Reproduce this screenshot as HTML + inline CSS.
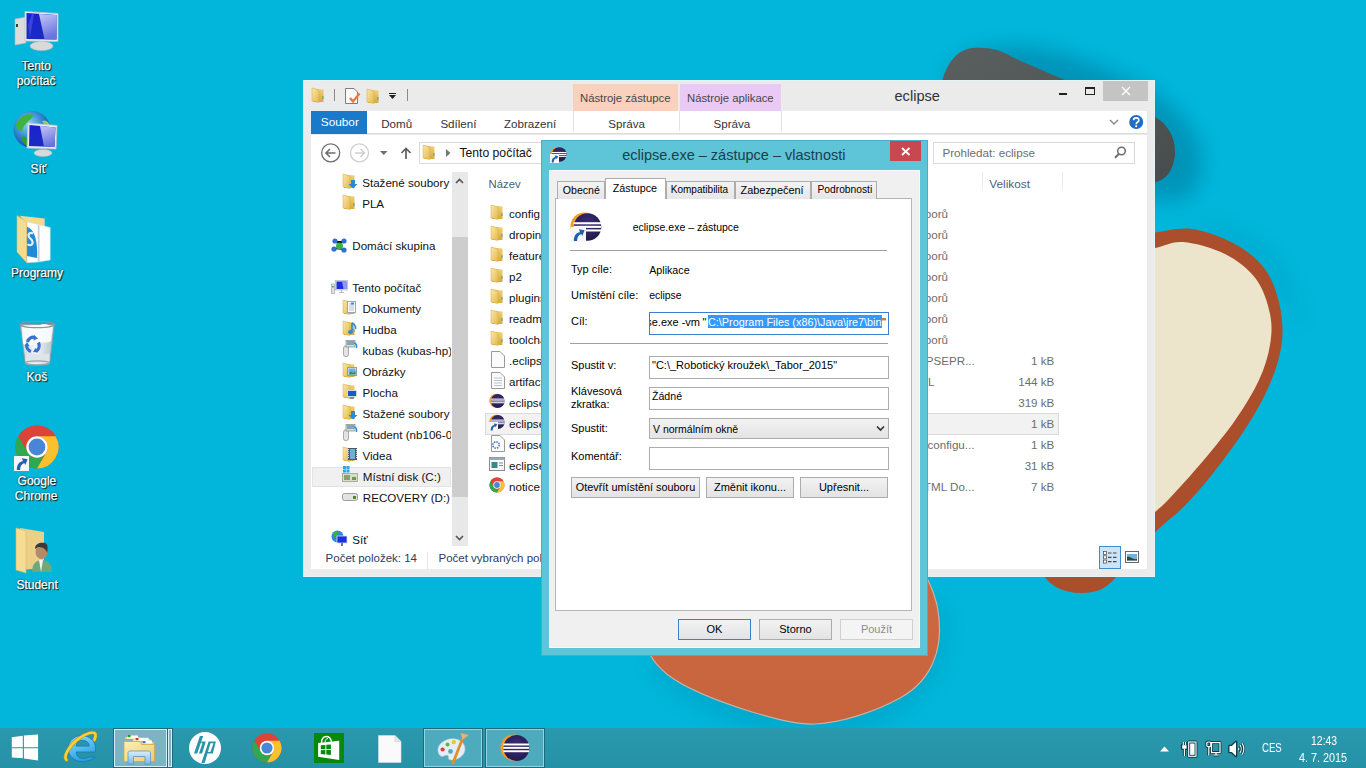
<!DOCTYPE html>
<html><head><meta charset="utf-8">
<style>
*{margin:0;padding:0;box-sizing:border-box}
html,body{width:1366px;height:768px;overflow:hidden}
body{background:#01b6da;font-family:"Liberation Sans",sans-serif;position:relative;font-size:12px;color:#000}
.a{position:absolute}
.t{position:absolute;white-space:nowrap;line-height:1}
.dl{color:#fff;-webkit-text-stroke:0.25px #fff;text-shadow:1px 1px 1px rgba(0,0,0,.95),0 0 2px rgba(0,0,0,.7)}
svg{position:absolute;overflow:visible}
</style></head><body>
<svg width="0" height="0" style="left:0;top:0"><defs>
<linearGradient id="gFold" x1="0" y1="0" x2="1" y2="1"><stop offset="0" stop-color="#fbe9a6"/><stop offset="1" stop-color="#e2b94f"/></linearGradient>
<linearGradient id="gFoldB" x1="0" y1="0" x2="0" y2="1"><stop offset="0" stop-color="#f1d27a"/><stop offset="1" stop-color="#d9aa3c"/></linearGradient>
<symbol id="fold16" viewBox="0 0 16 16">
  <path d="M3 1.5 L13.5 2.5 L13.5 15 L3 15 Z" fill="url(#gFoldB)"/>
  <path d="M2 1 L9 3 L9 15.5 L2 14 Z" fill="url(#gFold)" stroke="#d4a93f" stroke-width="0.5"/>
  <rect x="12.3" y="9" width="1.2" height="3" fill="#5aa58a"/>
</symbol>
<radialGradient id="gEcl" cx="0.5" cy="0.4" r="0.6"><stop offset="0" stop-color="#3c2f7a"/><stop offset="1" stop-color="#231a4c"/></radialGradient>
<symbol id="ecl" viewBox="0 0 32 32">
  <circle cx="14.5" cy="15.5" r="14" fill="#f39a2a"/>
  <circle cx="17.5" cy="16" r="13.8" fill="url(#gEcl)"/>
  <rect x="3.5" y="11.2" width="27.5" height="2.1" fill="#fff"/>
  <rect x="3.5" y="14.8" width="27.5" height="2.1" fill="#fff"/>
  <rect x="3.5" y="18.4" width="27.5" height="2.1" fill="#fff"/>
</symbol>
<symbol id="scut" viewBox="0 0 16 16">
  <rect x="0" y="0" width="16" height="16" fill="#f4f6f8"/>
  <path d="M3 15 C3 9 5.5 6 9.5 5.5 L8.5 2.5 L14.5 3.5 L12 9.5 L11 7.5 C8 8.5 6.5 11 6.5 15 Z" fill="#1f5fb0"/>
</symbol>
</defs></svg>
<svg width="1366" height="768" style="left:0;top:0">
<defs>
 <filter id="blur8" x="-50%" y="-50%" width="200%" height="200%"><feGaussianBlur stdDeviation="10"/></filter>
 <linearGradient id="gDark" x1="0" y1="0" x2="1" y2="1"><stop offset="0" stop-color="#59605f"/><stop offset="1" stop-color="#474d4c"/></linearGradient>
 <linearGradient id="gOr" x1="0" y1="0" x2="0" y2="1"><stop offset="0" stop-color="#cb6942"/><stop offset="1" stop-color="#c8643d"/></linearGradient>
</defs>
<path d="M950 70 C990 30 1060 45 1140 85 C1200 115 1220 170 1185 200 L940 200 Z" fill="#006a90" opacity="0.45" filter="url(#blur8)"/>
<path d="M1200 225 C1260 225 1300 280 1300 330 C1290 300 1250 240 1200 235 Z" fill="#006f96" opacity="0.18" filter="url(#blur8)"/>
<path d="M700 600 L940 600 C960 660 920 730 820 735 C740 735 680 700 650 670 Z" fill="#0089aa" opacity="0.3" filter="url(#blur8)"/>
<path d="M942 82 C947 62 958 49 973 48 C990 47 1000 50 1012 57 C1040 70 1100 95 1155 117 C1168 124 1176 138 1175 155 C1173 172 1165 182 1150 183 L940 183 Z" fill="url(#gDark)"/>
<path d="M1140.0 234.0 C1142.5 233.8 1146.4 233.3 1155.0 232.5 C1163.6 231.7 1178.7 227.2 1191.7 229.0 C1204.7 230.8 1221.2 236.8 1233.0 243.0 C1244.8 249.2 1255.2 257.3 1262.5 266.0 C1269.8 274.7 1273.7 284.7 1277.0 295.0 C1280.3 305.3 1282.2 317.6 1282.5 328.0 C1282.8 338.4 1281.6 347.0 1279.0 357.5 C1276.4 368.0 1272.2 379.2 1266.7 391.0 C1261.2 402.8 1254.8 414.2 1245.8 428.0 C1236.8 441.8 1223.0 460.8 1212.5 474.0 C1202.0 487.2 1192.6 497.8 1183.0 507.5 C1173.4 517.2 1166.2 520.9 1155.0 532.5 C1143.8 544.1 1122.5 569.6 1116.0 577.0 C1105 590 1095 593 1082 593 C1062 593 1048 585 1042 572 L1040 300 Z" fill="#ab4e2c"/>
<path d="M1140.0 249.0 C1142.5 248.8 1147.8 249.2 1155.0 248.0 C1162.2 246.8 1171.3 241.0 1183.0 242.0 C1194.7 243.0 1212.8 247.8 1225.0 254.0 C1237.2 260.2 1248.5 269.0 1256.0 279.0 C1263.5 289.0 1267.7 303.0 1270.0 314.0 C1272.3 325.0 1271.8 334.0 1270.0 345.0 C1268.2 356.0 1264.7 367.7 1259.0 380.0 C1253.3 392.3 1245.3 405.5 1236.0 419.0 C1226.7 432.5 1214.2 447.7 1203.0 461.0 C1191.8 474.3 1177.0 490.5 1169.0 499.0 C1161.0 507.5 1159.0 508.2 1155.0 512.0 C1151.0 515.8 1146.7 520.3 1145.0 522.0 Z" fill="#ede4cc"/>
<path d="M651 656 C655 664 662 670 668 675 C685 688 720 702 752 712 C780 720 800 725 815 724 C840 723 875 712 900 698 C918 688 928 676 934 660 C940 645 941 625 937 605 C934 592 930 584 928 580 L650 580 Z" fill="url(#gOr)" stroke="#e8c8b0" stroke-width="1.2" stroke-opacity="0.7"/>
</svg>
<svg width="60" height="60" style="left:8px;top:5px" viewBox="0 0 60 60">
 <defs><linearGradient id="gScr" x1="0" y1="0" x2="0" y2="1"><stop offset="0" stop-color="#1a22d0"/><stop offset="1" stop-color="#1a2cc0"/></linearGradient><linearGradient id="gScrL" x1="0" y1="0" x2="0.3" y2="1"><stop offset="0" stop-color="#c4c8f6"/><stop offset="1" stop-color="#6a74e0"/></linearGradient></defs>
 <path d="M7 14 L18 12 L18 38 L7 40 Z" fill="#dcdcdc" stroke="#b5b5b5" stroke-width="0.6"/>
 <rect x="8" y="19" width="2" height="3" fill="#2a4a2a"/>
 <path d="M17 6.5 L50 8.5 L50 36.5 L17 36 Z" fill="#e9ebee" stroke="#c0c4c8" stroke-width="0.8"/>
 <path d="M18.5 8 L48.5 10 L48.5 34.5 L18.5 34 Z" fill="url(#gScr)"/><path d="M31 8.9 L48.5 10 L48.5 34.5 L36.5 34.3 Z" fill="url(#gScrL)"/><path d="M20 20 L24 9 L26 9 L22 33 Z" fill="#5a64e0" opacity="0.5"/>
 <rect x="31" y="36" width="6" height="3" fill="#d0d0d0"/>
 <ellipse cx="33.5" cy="41" rx="11.5" ry="4.5" fill="#dadada" stroke="#bdbdbd" stroke-width="0.6"/>
</svg>
<svg width="60" height="55" style="left:8px;top:105px" viewBox="0 0 60 55">
 <defs><radialGradient id="gGlobe" cx="0.4" cy="0.35" r="0.7"><stop offset="0" stop-color="#8ad8f0"/><stop offset="0.6" stop-color="#2a7fd0"/><stop offset="1" stop-color="#1a3f98"/></radialGradient></defs>
 <circle cx="24" cy="24.5" r="18.5" fill="url(#gGlobe)"/>
 <path d="M8 20 C12 10 20 8 26 10 C22 16 16 18 14 26 C11 26 9 24 8 20 Z" fill="#3fb43a"/>
 <path d="M13 32 C18 30 22 34 21 42 C17 40 14 37 13 32 Z" fill="#2f9e2a"/>
 <path d="M34 16 C38 14 42 18 42 22 C39 22 36 20 34 16 Z" fill="#8fcf5a"/>
 <path d="M20 18 L49 20.5 L48 44 L19 43 Z" fill="#e9ebee" stroke="#c0c4c8" stroke-width="0.8"/>
 <path d="M21.5 20 L47.5 22.5 L46.5 42 L21 41 Z" fill="url(#gScr)"/><path d="M32 21 L47.5 22.5 L46.5 42 L36 41.5 Z" fill="url(#gScrL)"/>
 <ellipse cx="35" cy="48" rx="9" ry="3.5" fill="#dadada" stroke="#bdbdbd" stroke-width="0.6"/>
</svg>
<svg width="60" height="60" style="left:8px;top:208px" viewBox="0 0 60 60">
 <path d="M11.7 7.8 L36.7 10.5 L36.7 20 L18.75 16 Z" fill="#f2d98e"/>
 <path d="M18.75 14 L30 16.5 L30 54 L18.75 54.7 Z" fill="#ffffff" stroke="#d8e2e8" stroke-width="0.5"/>
 <path d="M30 16.5 L42.2 19.5 L42.2 52 L30 54 Z" fill="#fdfdfd" stroke="#d8e2e8" stroke-width="0.5"/>
 <path d="M30 17 L31.5 17.5 L31.5 53.5 L30 54 Z" fill="#c8d0d6"/>
 <path d="M18.75 18.5 C26 21 30 32 29 50 L18.75 48 Z" fill="#1f8ad8"/>
 <path d="M25 25.5 C22 24 19.5 26 21 29 C22.5 31.5 25.5 32 24.5 35.5 C23.5 38 20.5 37.5 19.5 36" stroke="#e4eef4" stroke-width="2.2" fill="none"/>
 <path d="M9 7.4 L18.75 14 L18.75 54.7 L9 44 Z" fill="#f5dc8f" stroke="#dcb860" stroke-width="0.6"/>
</svg>
<svg width="60" height="55" style="left:8px;top:315px" viewBox="0 0 60 55">
 <defs><linearGradient id="gBin" x1="0" y1="0" x2="1" y2="0"><stop offset="0" stop-color="#c3d3dc"/><stop offset="0.45" stop-color="#f4f8fa"/><stop offset="1" stop-color="#aebfc8"/></linearGradient></defs>
 <path d="M12.2 9.5 L46.2 9.5 L41.8 47.5 C41.5 50.5 17.5 50.5 17.2 47.5 Z" fill="url(#gBin)" stroke="#8d9ba3" stroke-width="0.8"/>
 <path d="M14 12 C20 8 26 14 32 10 C38 7 42 12 45 11 L43 26 C38 30 30 24 24 30 C20 33 16 30 15 28 Z" fill="#fbfdfe" opacity="0.9"/>
 <path d="M18 40 C24 36 34 42 41 38 L41.5 46 C35 49 22 49 17.6 46 Z" fill="#dfe6ea"/>
 <ellipse cx="29.2" cy="9.5" rx="17" ry="3.2" fill="none" stroke="#8a969c" stroke-width="1.2"/>
 <ellipse cx="29.5" cy="48" rx="12.2" ry="2.2" fill="none" stroke="#9aa4a9" stroke-width="1.2"/>
 <path d="M19.5 27 C20.5 23 24 21.5 27 22.5" stroke="#3a6fd0" stroke-width="3.2" fill="none"/><path d="M26 20 L30 23.5 L25.5 25.5 Z" fill="#3a6fd0"/>
 <path d="M30.5 27.5 C32 31 31 34.5 28 36" stroke="#3a6fd0" stroke-width="3.2" fill="none"/><path d="M30 37.5 L25 37 L27.5 33 Z" fill="#3a6fd0"/>
 <path d="M23 36.5 C20 35.5 18.3 32.5 18.8 29.5" stroke="#3a6fd0" stroke-width="3.2" fill="none"/><path d="M16.5 31 L19 27 L21.5 31 Z" fill="#3a6fd0"/>
</svg>
<svg width="60" height="55" style="left:8px;top:420px" viewBox="0 0 60 55"><circle cx="29" cy="27" r="21.5" fill="#db4437"/><path d="M47.62 16.25 A21.5 21.5 0 0 0 10.38 16.25 L19.69 32.38 A10.75 10.75 0 0 1 29.00 16.25 Z" fill="#db4437"/><path d="M10.38 16.25 A21.5 21.5 0 0 0 29.00 48.50 L38.31 32.38 A10.75 10.75 0 0 1 19.69 32.38 Z" fill="#2fa84f"/><path d="M29.00 48.50 A21.5 21.5 0 0 0 47.62 16.25 L29.00 16.25 A10.75 10.75 0 0 1 38.31 32.38 Z" fill="#fbc02d"/><circle cx="29" cy="27" r="10.75" fill="#fff"/><circle cx="29" cy="27" r="8.4" fill="#4a86d8"/></svg>
<svg width="15" height="15" style="left:14px;top:456px" viewBox="0 0 16 16"><use href="#scut"/></svg>
<svg width="60" height="60" style="left:8px;top:520px" viewBox="0 0 60 60">
 <path d="M12 8 L36 12 L36 48 L12 50 Z" fill="#ecd08a"/>
 <path d="M8 8 L18 11 L18 53 L8 50 Z" fill="#f6dd95" stroke="#dcbb60" stroke-width="0.6"/>
 <path d="M24 52 C24 44 28 40 34 40 C40 40 44 44 44 52 Z" fill="#6fa87a"/>
 <path d="M31 40 L33 52 L35 40 Z" fill="#f4f4f4"/>
 <ellipse cx="33.5" cy="32" rx="6" ry="7" fill="#b38a6a"/>
 <path d="M27 29 C27 23 33 22 37 23 C40 24 40 28 39 33 C38 29 35 27 30 27 Z" fill="#3a3a3a"/>
</svg>
<div class="t dl" style="left:21.5px;top:59.74px;font-size:12px;color:#fff;">Tento</div>
<div class="t dl" style="left:16.8px;top:74.74px;font-size:12px;color:#fff;">počítač</div>
<div class="t dl" style="left:30.5px;top:162.54px;font-size:12px;color:#fff;">Síť</div>
<div class="t dl" style="left:11.0px;top:266.74px;font-size:12px;color:#fff;">Programy</div>
<div class="t dl" style="left:26.6px;top:370.74px;font-size:12px;color:#fff;">Koš</div>
<div class="t dl" style="left:17.6px;top:475.44px;font-size:12px;color:#fff;">Google</div>
<div class="t dl" style="left:14.8px;top:489.74px;font-size:12px;color:#fff;">Chrome</div>
<div class="t dl" style="left:16.4px;top:578.54px;font-size:12px;color:#fff;">Student</div>
<div class="a" style="left:303px;top:80px;width:852px;height:497px;background:#ebebeb;border:1px solid #e2f4f8"></div>
<div class="a" style="left:573px;top:84px;width:105px;height:27px;background:#fad1bd"></div>
<div class="a" style="left:680px;top:84px;width:101px;height:27px;background:#eac9f5"></div>
<div class="t " style="left:580.0px;top:93.13px;font-size:11.3px;color:#474747;">Nástroje zástupce</div>
<div class="t " style="left:687.0px;top:93.13px;font-size:11.3px;color:#474747;">Nástroje aplikace</div>
<div class="t " style="left:894.5px;top:88.54px;font-size:14.6px;color:#333;">eclipse</div>
<div class="a" style="left:1059px;top:93px;width:8px;height:2px;background:#222"></div>
<div class="a" style="left:1085px;top:87px;width:10px;height:8px;border:1px solid #222;border-top-width:2px"></div>
<div class="a" style="left:1103px;top:81px;width:45px;height:20px;background:#c4c4c4"></div>
<svg width="10" height="10" style="left:1121px;top:86px"><path d="M1 1 L9 9 M9 1 L1 9" stroke="#fff" stroke-width="1.3"/></svg>
<svg width="16" height="16" style="left:310px;top:87px"><use href="#fold16"/></svg>
<div class="a" style="left:334px;top:89px;width:1px;height:12px;background:#8a8a8a"></div>
<svg width="18" height="17" style="left:344px;top:88px">
<path d="M1.5 0.5 L10 0.5 L13.5 4 L13.5 15.5 L1.5 15.5 Z" fill="#fafafa" stroke="#7d7d7d"/>
<path d="M6 10 L9 13.5 L15.5 5.5" stroke="#ea7a3c" stroke-width="2.4" fill="none"/></svg>
<svg width="16" height="16" style="left:365px;top:88px"><use href="#fold16"/></svg>
<div class="a" style="left:389px;top:93px;width:7px;height:1px;background:#222"></div>
<svg width="8" height="5" style="left:389px;top:95px"><path d="M0 0 L7 0 L3.5 4 Z" fill="#222"/></svg>
<div class="a" style="left:407px;top:89px;width:1px;height:12px;background:#8a8a8a"></div>
<div class="a" style="left:311px;top:111px;width:836px;height:23px;background:#fff;border-bottom:1px solid #dadbdc"></div>
<div class="a" style="left:311px;top:111px;width:56px;height:23px;background:#1979ca"></div>
<div class="t " style="left:320.8px;top:117.31px;font-size:11.8px;color:#fff;">Soubor</div>
<div class="t " style="left:381.2px;top:117.98px;font-size:11.6px;color:#333;">Domů</div>
<div class="t " style="left:440.4px;top:117.98px;font-size:11.6px;color:#333;">Sdílení</div>
<div class="t " style="left:504.0px;top:117.98px;font-size:11.6px;color:#333;">Zobrazení</div>
<div class="a" style="left:573px;top:111px;width:1px;height:20px;background:#e3e3e3"></div>
<div class="a" style="left:679px;top:111px;width:1px;height:20px;background:#e3e3e3"></div>
<div class="a" style="left:781px;top:111px;width:1px;height:20px;background:#e3e3e3"></div>
<div class="t " style="left:608.3px;top:117.98px;font-size:11.6px;color:#333;">Správa</div>
<div class="t " style="left:713.5px;top:117.98px;font-size:11.6px;color:#333;">Správa</div>
<svg width="10" height="7" style="left:1109px;top:119px"><path d="M1 1 L5 5 L9 1" stroke="#8c8c8c" stroke-width="1.5" fill="none"/></svg>
<svg width="15" height="15" style="left:1129px;top:115px"><circle cx="7.2" cy="7" r="7" fill="#1e6ec5"/>
<path d="M4.6 5.2 C4.6 2.2 9.8 2.2 9.8 5.2 C9.8 7.2 7.2 7.2 7.2 9.2" stroke="#fff" stroke-width="1.7" fill="none"/><rect x="6.3" y="10.3" width="1.8" height="1.8" fill="#fff"/></svg>
<div class="a" style="left:311px;top:135px;width:836px;height:434px;background:#fff"></div>
<svg width="20" height="20" style="left:321px;top:143px"><circle cx="9.7" cy="9.9" r="9" fill="none" stroke="#6e6e6e" stroke-width="1.3"/>
<path d="M5 10 L14.5 10 M9 6 L5 10 L9 14" stroke="#6e6e6e" stroke-width="1.6" fill="none"/></svg>
<svg width="20" height="20" style="left:350px;top:143px"><circle cx="9.5" cy="9.9" r="9" fill="none" stroke="#cfcfcf" stroke-width="1.3"/>
<path d="M5 10 L14.5 10 M10.5 6 L14.5 10 L10.5 14" stroke="#cfcfcf" stroke-width="1.6" fill="none"/></svg>
<svg width="8" height="5" style="left:380px;top:151px"><path d="M0 0 L7.5 0 L3.75 4 Z" fill="#6e6e6e"/></svg>
<svg width="12" height="13" style="left:400px;top:147px"><path d="M6 12 L6 1.5 M1.5 6 L6 1.5 L10.5 6" stroke="#5e5e5e" stroke-width="1.7" fill="none"/></svg>
<div class="a" style="left:419px;top:142px;width:200px;height:22px;background:#fff;border:1px solid #d9d9d9"></div>
<svg width="16" height="16" style="left:421px;top:144px"><use href="#fold16"/></svg>
<svg width="5" height="8" style="left:446px;top:149px"><path d="M0 0 L4.5 4 L0 8 Z" fill="#777"/></svg>
<div class="t " style="left:459.4px;top:146.97px;font-size:12.2px;color:#111;">Tento počítač</div>
<div class="a" style="left:933px;top:142px;width:202px;height:22px;background:#fff;border:1px solid #d9d9d9"></div>
<div class="t " style="left:942.4px;top:147.44px;font-size:11.65px;color:#6d6d6d;">Prohledat: eclipse</div>
<svg width="13" height="13" style="left:1114px;top:146px"><circle cx="7.5" cy="5" r="3.8" fill="none" stroke="#6d6d6d" stroke-width="1.5"/><path d="M5 7.7 L1 11.7" stroke="#6d6d6d" stroke-width="2"/></svg>
<div class="a" style="left:452px;top:172px;width:16px;height:374px;background:#e8e8e8"></div>
<div class="a" style="left:452px;top:237px;width:16px;height:260px;background:#cdcdcd"></div>
<svg width="10" height="6" style="left:455px;top:178px"><path d="M1 5 L4.5 1.5 L8 5" stroke="#555" stroke-width="1.6" fill="none"/></svg>
<svg width="10" height="6" style="left:455px;top:535px"><path d="M1 1 L4.5 4.5 L8 1" stroke="#555" stroke-width="1.6" fill="none"/></svg>
<div class="a" style="left:312px;top:467px;width:139px;height:20px;background:#f0f0f0;border:1px solid #e3e3e3"></div>
<div class="a" style="left:311px;top:170px;width:140px;height:380px;overflow:hidden">
<div class="t " style="left:51.2px;top:7.18px;font-size:11.6px;color:#111;">Stažené soubory</div>
<svg width="16" height="16" style="left:30px;top:3px"><use href="#fold16"/></svg>
<svg width="10" height="9" style="left:37px;top:10px"><path d="M3 0 L7 0 L7 4 L9.5 4 L5 8.5 L0.5 4 L3 4 Z" fill="#2a8ad8"/></svg>
<div class="t " style="left:51.2px;top:28.18px;font-size:11.6px;color:#111;">PLA</div>
<svg width="16" height="16" style="left:30px;top:24px"><use href="#fold16"/></svg>
<div class="t " style="left:41.3px;top:70.18px;font-size:11.6px;color:#111;">Domácí skupina</div>
<svg width="17" height="17" style="left:20px;top:67px"><path d="M4 4 L8.5 9 L13 4 M3 12 L8.5 9 L13 13" stroke="#7ab" stroke-width="1"/><circle cx="8.5" cy="9" r="3.5" fill="#3cb043"/><circle cx="4" cy="4" r="2.6" fill="#2f6fcf"/><circle cx="13" cy="4" r="2.6" fill="#2f6fcf"/><circle cx="3" cy="12" r="2.6" fill="#2f6fcf"/><circle cx="13" cy="13" r="2.6" fill="#2f6fcf"/></svg>
<div class="t " style="left:41.3px;top:112.18px;font-size:11.6px;color:#111;">Tento počítač</div>
<svg width="17" height="15" style="left:20px;top:110px"><rect x="0.5" y="4" width="3" height="9.5" fill="#e0e0e0" stroke="#999" stroke-width="0.6"/><rect x="1.2" y="6" width="1.5" height="1.5" fill="#3a3"/><rect x="4.5" y="0.5" width="12" height="9.5" fill="#e8eaec" stroke="#aab" stroke-width="0.6"/><rect x="5.5" y="1.5" width="10" height="7.5" fill="#1a2ee0"/><path d="M11 1.5 L15.5 1.5 L15.5 9 L12.5 9 Z" fill="#8f98ee"/><path d="M8 12.5 H13 M10.5 10 V12.5" stroke="#bbb" stroke-width="1.2"/></svg>
<div class="t " style="left:51.5px;top:133.18px;font-size:11.6px;color:#111;">Dokumenty</div>
<svg width="16" height="16" style="left:30px;top:129px"><use href="#fold16"/></svg>
<svg width="9" height="12" style="left:36px;top:131px"><rect x="0.5" y="0.5" width="8" height="11" fill="#fff" stroke="#9aa"/><path d="M2 3 H7 M2 5 H7 M2 7 H7 M2 9 H7" stroke="#9ab" stroke-width="0.8"/><rect x="4" y="1.5" width="3" height="2" fill="#3a8ad0"/></svg>
<div class="t " style="left:51.5px;top:154.18px;font-size:11.6px;color:#111;">Hudba</div>
<svg width="16" height="16" style="left:30px;top:150px"><use href="#fold16"/></svg>
<svg width="9" height="13" style="left:37px;top:152px"><path d="M4 1 L4 9 M4 1 C6 2 8 4 7.5 7" stroke="#2a8ad8" stroke-width="1.6" fill="none"/><ellipse cx="2.5" cy="10" rx="2.5" ry="2" fill="#2a8ad8"/></svg>
<div class="t " style="left:51.5px;top:175.18px;font-size:11.6px;color:#111;">kubas (kubas-hp)</div>
<svg width="17" height="17" style="left:31px;top:170px"><rect x="1.5" y="6" width="5" height="10.5" rx="2" fill="#e4e4e4" stroke="#8a8a8a" stroke-width="0.7"/><rect x="4" y="0.5" width="9" height="6.5" fill="#cfe0d8" stroke="#777" stroke-width="0.6"/><path d="M5 2 H12 M5 4 H12" stroke="#3a6a9a" stroke-width="1"/><path d="M12 3 C14 3 15 5 14.5 8" stroke="#2a8ad8" stroke-width="1.4" fill="none"/></svg>
<div class="t " style="left:51.5px;top:196.18px;font-size:11.6px;color:#111;">Obrázky</div>
<svg width="16" height="16" style="left:30px;top:192px"><use href="#fold16"/></svg>
<svg width="10" height="9" style="left:36px;top:197px"><rect x="0.5" y="0.5" width="9" height="8" fill="#eef" stroke="#99a"/><rect x="1.5" y="1.5" width="7" height="6" fill="#6ab0d8"/><path d="M1.5 7.5 L4 4.5 L6 6 L8.5 4 L8.5 7.5 Z" fill="#3a8a5a"/></svg>
<div class="t " style="left:51.5px;top:217.18px;font-size:11.6px;color:#111;">Plocha</div>
<svg width="16" height="16" style="left:30px;top:213px"><use href="#fold16"/></svg>
<svg width="10" height="9" style="left:36px;top:220px"><rect x="0.5" y="0.5" width="9" height="6" fill="#1a5ac8" stroke="#cdd"/><rect x="3" y="7" width="4" height="2" fill="#889"/></svg>
<div class="t " style="left:51.5px;top:238.18px;font-size:11.6px;color:#111;">Stažené soubory</div>
<svg width="16" height="16" style="left:30px;top:234px"><use href="#fold16"/></svg>
<svg width="10" height="9" style="left:37px;top:241px"><path d="M3 0 L7 0 L7 4 L9.5 4 L5 8.5 L0.5 4 L3 4 Z" fill="#2a8ad8"/></svg>
<div class="t " style="left:51.5px;top:259.18px;font-size:11.6px;color:#111;">Student (nb106-0</div>
<svg width="17" height="17" style="left:31px;top:254px"><rect x="1.5" y="6" width="5" height="10.5" rx="2" fill="#e4e4e4" stroke="#8a8a8a" stroke-width="0.7"/><rect x="4" y="0.5" width="9" height="6.5" fill="#cfe0d8" stroke="#777" stroke-width="0.6"/><path d="M5 2 H12 M5 4 H12" stroke="#3a6a9a" stroke-width="1"/><path d="M12 3 C14 3 15 5 14.5 8" stroke="#2a8ad8" stroke-width="1.4" fill="none"/></svg>
<div class="t " style="left:51.5px;top:280.18px;font-size:11.6px;color:#111;">Videa</div>
<svg width="16" height="16" style="left:30px;top:276px"><use href="#fold16"/></svg>
<svg width="9" height="12" style="left:37px;top:278px"><rect x="0" y="0" width="9" height="12" fill="#556"/><rect x="2" y="1" width="5" height="10" fill="#6ab0d8"/><path d="M0.5 1 V11 M8.5 1 V11" stroke="#fff" stroke-width="0.8" stroke-dasharray="1 1"/></svg>
<div class="t " style="left:51.8px;top:301.18px;font-size:11.6px;color:#111;">Místní disk (C:)</div>
<svg width="16" height="16" style="left:31px;top:296px"><rect x="1" y="0" width="3" height="3" fill="#29a8e8"/><rect x="4.5" y="0" width="3" height="3" fill="#29a8e8"/><rect x="1" y="3.5" width="3" height="3" fill="#29a8e8"/><rect x="4.5" y="3.5" width="3" height="3" fill="#29a8e8"/><rect x="0.5" y="7.5" width="15" height="8" fill="#d8dccf" stroke="#8c9a7e" stroke-width="0.7"/><rect x="2" y="9" width="6" height="5" fill="#8aa070"/><rect x="10" y="11" width="4" height="3" fill="#6a9a4a"/></svg>
<div class="t " style="left:51.8px;top:322.18px;font-size:11.6px;color:#111;">RECOVERY (D:)</div>
<svg width="16" height="10" style="left:31px;top:322px"><rect x="0.5" y="1.5" width="15" height="7" rx="2" fill="#e2e2e2" stroke="#8a8a8a" stroke-width="0.8"/><rect x="11" y="4" width="3" height="3" fill="#4a8a2a"/></svg>
<div class="t " style="left:41.3px;top:363.68px;font-size:11.6px;color:#111;">Síť</div>
<svg width="17" height="17" style="left:20px;top:359.5px"><circle cx="6.5" cy="6.5" r="6" fill="#2a8ad8"/><path d="M2 4 C4 1 7 1 8 3 C6 5 4 6 3 8 Z" fill="#3cb043"/><rect x="6" y="6" width="10" height="7" fill="#1a2ee0" stroke="#ddd" stroke-width="0.8"/><rect x="10" y="13" width="2" height="3" fill="#777"/></svg>
</div>
<div class="t " style="left:488.6px;top:179.23px;font-size:11.3px;color:#4c607a;">Název</div>
<div class="a" style="left:982px;top:172px;width:1px;height:18px;background:#e8ecf0"></div>
<div class="a" style="left:1062px;top:172px;width:1px;height:18px;background:#e8ecf0"></div>
<div class="t " style="left:989.3px;top:178.61px;font-size:11.8px;color:#4c607a;">Velikost</div>
<div class="a" style="left:485px;top:413px;width:574px;height:22px;background:#f2f2f2;border:1px solid #dadada"></div>
<div class="a" style="left:480px;top:200px;width:61px;height:300px;overflow:hidden">
<div class="t " style="left:29.0px;top:8.18px;font-size:11.6px;color:#111;">config</div>
<svg width="16" height="16" style="left:9px;top:4px"><use href="#fold16"/></svg>
<div class="t " style="left:29.0px;top:29.18px;font-size:11.6px;color:#111;">dropins</div>
<svg width="16" height="16" style="left:9px;top:25px"><use href="#fold16"/></svg>
<div class="t " style="left:29.0px;top:50.18px;font-size:11.6px;color:#111;">features</div>
<svg width="16" height="16" style="left:9px;top:46px"><use href="#fold16"/></svg>
<div class="t " style="left:29.0px;top:71.18px;font-size:11.6px;color:#111;">p2</div>
<svg width="16" height="16" style="left:9px;top:67px"><use href="#fold16"/></svg>
<div class="t " style="left:29.0px;top:92.18px;font-size:11.6px;color:#111;">plugins</div>
<svg width="16" height="16" style="left:9px;top:88px"><use href="#fold16"/></svg>
<div class="t " style="left:29.0px;top:113.18px;font-size:11.6px;color:#111;">readme</div>
<svg width="16" height="16" style="left:9px;top:109px"><use href="#fold16"/></svg>
<div class="t " style="left:29.0px;top:134.18px;font-size:11.6px;color:#111;">toolchains</div>
<svg width="16" height="16" style="left:9px;top:130px"><use href="#fold16"/></svg>
<div class="t " style="left:29.0px;top:155.18px;font-size:11.6px;color:#111;">.eclipseproduct</div>
<svg width="14" height="17" style="left:11px;top:151px"><path d="M0.5 0.5 L9 0.5 L13.5 5 L13.5 16.5 L0.5 16.5 Z" fill="#fbfbfb" stroke="#9a9a9a"/></svg>
<div class="t " style="left:29.0px;top:176.18px;font-size:11.6px;color:#111;">artifacts.xml</div>
<svg width="14" height="17" style="left:11px;top:172px"><path d="M0.5 0.5 L9 0.5 L13.5 5 L13.5 16.5 L0.5 16.5 Z" fill="#fbfbfb" stroke="#9a9a9a"/><path d="M3 6 H11 M3 8.5 H11 M3 11 H11 M3 13.5 H11" stroke="#b8c4d0"/></svg>
<div class="t " style="left:29.0px;top:197.18px;font-size:11.6px;color:#111;">eclipse.exe</div>
<svg width="16" height="16" style="left:9px;top:193px"><use href="#ecl"/></svg>
<div class="t " style="left:29.0px;top:218.18px;font-size:11.6px;color:#111;">eclipse.exe</div>
<svg width="16" height="16" style="left:9px;top:214px"><use href="#ecl"/></svg>
<svg width="9" height="9" style="left:9px;top:222px"><use href="#scut"/></svg>
<div class="t " style="left:29.0px;top:239.18px;font-size:11.6px;color:#111;">eclipse.ini</div>
<svg width="14" height="17" style="left:11px;top:235px"><path d="M0.5 0.5 L9 0.5 L13.5 5 L13.5 16.5 L0.5 16.5 Z" fill="#fbfbfb" stroke="#9a9a9a"/><circle cx="5" cy="10" r="3.2" fill="none" stroke="#4a7ac0" stroke-width="1.6" stroke-dasharray="1.5 1"/></svg>
<div class="t " style="left:29.0px;top:260.18px;font-size:11.6px;color:#111;">eclipsec.exe</div>
<svg width="17" height="14" style="left:9px;top:257px"><rect x="0.5" y="0.5" width="15" height="13" fill="#fafafa" stroke="#8a8a8a"/><rect x="0.5" y="0.5" width="15" height="2.5" fill="#9ab"/><rect x="2.5" y="5" width="6" height="6" fill="#3a8a8a"/><path d="M10 6 H14 M10 8.5 H14" stroke="#889"/></svg>
<div class="t " style="left:29.0px;top:281.18px;font-size:11.6px;color:#111;">notice.html</div>
<svg width="16" height="16" style="left:9px;top:277px"><circle cx="8" cy="8" r="7.5" fill="#db4437"/><path d="M14.50 4.25 A7.5 7.5 0 0 0 1.50 4.25 L4.75 9.88 A3.75 3.75 0 0 1 8.00 4.25 Z" fill="#db4437"/><path d="M1.50 4.25 A7.5 7.5 0 0 0 8.00 15.50 L11.25 9.88 A3.75 3.75 0 0 1 4.75 9.88 Z" fill="#2fa84f"/><path d="M8.00 15.50 A7.5 7.5 0 0 0 14.50 4.25 L8.00 4.25 A3.75 3.75 0 0 1 11.25 9.88 Z" fill="#fbc02d"/><circle cx="8" cy="8" r="3.75" fill="#fff"/><circle cx="8" cy="8" r="2.9" fill="#4a86d8"/></svg>
</div>
<div class="t" style="right:418.0px;top:208.18px;font-size:11.6px;color:#6d6d6d;text-align:right;">složka souborů</div>
<div class="t" style="right:418.0px;top:229.18px;font-size:11.6px;color:#6d6d6d;text-align:right;">složka souborů</div>
<div class="t" style="right:418.0px;top:250.18px;font-size:11.6px;color:#6d6d6d;text-align:right;">složka souborů</div>
<div class="t" style="right:418.0px;top:271.18px;font-size:11.6px;color:#6d6d6d;text-align:right;">složka souborů</div>
<div class="t" style="right:418.0px;top:292.18px;font-size:11.6px;color:#6d6d6d;text-align:right;">složka souborů</div>
<div class="t" style="right:418.0px;top:313.18px;font-size:11.6px;color:#6d6d6d;text-align:right;">složka souborů</div>
<div class="t" style="right:418.0px;top:334.18px;font-size:11.6px;color:#6d6d6d;text-align:right;">složka souborů</div>
<div class="t" style="right:391.2px;top:355.18px;font-size:11.6px;color:#6d6d6d;text-align:right;">ECLIPSEPR...</div>
<div class="t" style="right:311.7px;top:355.18px;font-size:11.6px;color:#6d6d6d;text-align:right;">1 kB</div>
<div class="t" style="right:431.5px;top:376.18px;font-size:11.6px;color:#6d6d6d;text-align:right;">Dokument XML</div>
<div class="t" style="right:311.7px;top:376.18px;font-size:11.6px;color:#6d6d6d;text-align:right;">144 kB</div>
<div class="t" style="right:311.7px;top:397.18px;font-size:11.6px;color:#6d6d6d;text-align:right;">319 kB</div>
<div class="t" style="right:311.7px;top:418.18px;font-size:11.6px;color:#6d6d6d;text-align:right;">1 kB</div>
<div class="t" style="right:391.5px;top:439.18px;font-size:11.6px;color:#6d6d6d;text-align:right;">Nastavení configu...</div>
<div class="t" style="right:311.7px;top:439.18px;font-size:11.6px;color:#6d6d6d;text-align:right;">1 kB</div>
<div class="t" style="right:311.7px;top:460.18px;font-size:11.6px;color:#6d6d6d;text-align:right;">31 kB</div>
<div class="t" style="right:391.5px;top:481.18px;font-size:11.6px;color:#6d6d6d;text-align:right;">Chrome HTML Do...</div>
<div class="t" style="right:311.7px;top:481.18px;font-size:11.6px;color:#6d6d6d;text-align:right;">7 kB</div>
<div class="t " style="left:325.6px;top:552.67px;font-size:11.5px;color:#2c3c5c;">Počet položek: 14</div>
<div class="a" style="left:427px;top:552px;width:1px;height:18px;background:#e5e5e5"></div>
<div class="t " style="left:438.5px;top:552.67px;font-size:11.5px;color:#2c3c5c;">Počet vybraných položek: 1</div>
<div class="a" style="left:1099px;top:546px;width:22px;height:23px;background:#cce4f7;border:1px solid #3d8ed0"></div>
<svg width="14" height="13" style="left:1103px;top:551px"><rect x="0.5" y="0.5" width="3" height="3" fill="#fff" stroke="#555" stroke-width="0.8"/><rect x="0.5" y="4.8" width="3" height="3" fill="#fff" stroke="#555" stroke-width="0.8"/><rect x="0.5" y="9.1" width="3" height="3" fill="#fff" stroke="#555" stroke-width="0.8"/>
<path d="M5 2 H8.5 M10 2 H13.5 M5 6.3 H8.5 M10 6.3 H13.5 M5 10.6 H8.5 M10 10.6 H13.5" stroke="#4a4a4a" stroke-width="1.2"/></svg>
<svg width="14" height="12" style="left:1125px;top:551px"><rect x="0.5" y="0.5" width="13" height="11" fill="#fff" stroke="#666"/><path d="M2 3 H12 V9.5 H2 Z" fill="#7ab0d8"/><path d="M2 6 C5 5 8 9 12 8 L12 9.5 L2 9.5 Z" fill="#2a4a3a"/></svg>
<div class="a" style="left:541px;top:140px;width:387px;height:516px;background:#5ec4d7;border:1px solid #4aaec4"></div>
<div class="a" style="left:548.5px;top:170px;width:371.5px;height:478px;background:#f0f0f0;border:1px solid #f6fbfc"></div>
<svg width="17" height="17" style="left:550px;top:146px"><use href="#ecl"/></svg>
<svg width="9" height="9" style="left:550px;top:154px"><use href="#scut"/></svg>
<div class="t " style="left:622.2px;top:148.03px;font-size:14.5px;color:#1b3d4c;">eclipse.exe – zástupce – vlastnosti</div>
<div class="a" style="left:890px;top:141px;width:31px;height:20px;background:#c7484e"></div>
<svg width="10" height="9" style="left:901px;top:147px"><path d="M1 1 L8.5 8 M8.5 1 L1 8" stroke="#fff" stroke-width="1.8"/></svg>
<div class="a" style="left:555px;top:198px;width:357px;height:413px;background:#fff;border:1px solid #b5b5b5"></div>
<div class="a" style="left:557px;top:181px;width:48px;height:18px;background:linear-gradient(#f3f3f3,#e6e6e6);border:1px solid #adadad;border-bottom:none"></div>
<div class="t " style="left:562.8px;top:184.93px;font-size:10.6px;color:#000;">Obecné</div>
<div class="a" style="left:666px;top:181px;width:69px;height:18px;background:linear-gradient(#f3f3f3,#e6e6e6);border:1px solid #adadad;border-bottom:none"></div>
<div class="t " style="left:670.7px;top:185.39px;font-size:10.05px;color:#000;">Kompatibilita</div>
<div class="a" style="left:735px;top:181px;width:76px;height:18px;background:linear-gradient(#f3f3f3,#e6e6e6);border:1px solid #adadad;border-bottom:none"></div>
<div class="t " style="left:740.6px;top:184.67px;font-size:10.9px;color:#000;">Zabezpečení</div>
<div class="a" style="left:811px;top:181px;width:66px;height:18px;background:linear-gradient(#f3f3f3,#e6e6e6);border:1px solid #adadad;border-bottom:none"></div>
<div class="t " style="left:817.5px;top:185.22px;font-size:10.25px;color:#000;">Podrobnosti</div>
<div class="a" style="left:605px;top:178px;width:61px;height:21px;background:#fff;border:1px solid #adadad;border-bottom:none"></div>
<div class="t " style="left:612.8px;top:182.50px;font-size:10.75px;color:#000;">Zástupce</div>
<svg width="32" height="32" style="left:570px;top:211px"><use href="#ecl"/></svg>
<svg width="15" height="15" style="left:571px;top:227px"><use href="#scut"/></svg>
<div class="t " style="left:632.7px;top:221.71px;font-size:10.5px;color:#000;">eclipse.exe – zástupce</div>
<div class="a" style="left:570px;top:250px;width:317px;height:1px;background:#a0a0a0"></div>
<div class="t " style="left:571.0px;top:264.39px;font-size:11px;color:#000;">Typ cíle:</div>
<div class="t " style="left:571.0px;top:290.49px;font-size:11px;color:#000;">Umístění cíle:</div>
<div class="t " style="left:571.0px;top:316.49px;font-size:11px;color:#000;">Cíl:</div>
<div class="t " style="left:571.0px;top:360.39px;font-size:11px;color:#000;">Spustit v:</div>
<div class="t " style="left:571.0px;top:386.19px;font-size:11px;color:#000;">Klávesová</div>
<div class="t " style="left:571.0px;top:399.19px;font-size:11px;color:#000;">zkratka:</div>
<div class="t " style="left:571.0px;top:423.19px;font-size:11px;color:#000;">Spustit:</div>
<div class="t " style="left:571.0px;top:451.19px;font-size:11px;color:#000;">Komentář:</div>
<div class="t " style="left:649.2px;top:264.64px;font-size:10.7px;color:#000;">Aplikace</div>
<div class="t " style="left:649.2px;top:291.00px;font-size:10.4px;color:#000;">eclipse</div>
<div class="a" style="left:570px;top:343px;width:318px;height:1px;background:#a0a0a0"></div>
<div class="a" style="left:649px;top:312px;width:240px;height:23px;background:#fff;border:1px solid #3c7fd1"></div>
<div class="a" style="left:650px;top:313px;width:238px;height:21px;overflow:hidden">
<div class="a" style="left:58px;top:2px;width:174px;height:13px;background:#3399ff"></div>
<div class="t" style="right:188.0px;top:3.69px;font-size:11px;color:#000;text-align:right;">se.exe -vm</div>
<div class="t " style="left:52.5px;top:3.69px;font-size:11px;color:#000;">"</div>
<div class="t " style="left:58.0px;top:3.82px;font-size:10.85px;color:#fff;">C:\Program Files (x86)\Java\jre7\bin</div>
<div class="t " style="left:232.0px;top:3.69px;font-size:11px;color:#000;">"</div>
</div>
<div class="a" style="left:649px;top:356px;width:240px;height:23px;background:#fff;border:1px solid #abadb3"></div>
<div class="t " style="left:652.0px;top:360.19px;font-size:11px;color:#000;">"C:\_Robotický kroužek\_Tabor_2015"</div>
<div class="a" style="left:649px;top:387px;width:240px;height:23px;background:#fff;border:1px solid #abadb3"></div>
<div class="t " style="left:652.0px;top:391.33px;font-size:10.6px;color:#000;">Žádné</div>
<div class="a" style="left:649px;top:418px;width:240px;height:21px;background:linear-gradient(#f2f2f2,#e4e4e4);border:1px solid #acacac"></div>
<div class="t " style="left:653.0px;top:424.01px;font-size:10.5px;color:#000;">V normálním okně</div>
<svg width="9" height="7" style="left:876px;top:425px"><path d="M1 1.5 L4.5 5 L8 1.5" stroke="#333" stroke-width="1.7" fill="none"/></svg>
<div class="a" style="left:649px;top:447px;width:240px;height:23px;background:#fff;border:1px solid #abadb3"></div>
<div class="a" style="left:571px;top:477px;width:129px;height:21px;background:linear-gradient(#f2f2f2,#e3e3e3);border:1px solid #acacac"></div>
<div class="t" style="left:535.5px;width:200px;text-align:center;top:482.32px;font-size:10.85px;color:#000;">Otevřít umístění souboru</div>
<div class="a" style="left:706px;top:477px;width:88px;height:21px;background:linear-gradient(#f2f2f2,#e3e3e3);border:1px solid #acacac"></div>
<div class="t" style="left:650.0px;width:200px;text-align:center;top:482.19px;font-size:11px;color:#000;">Změnit ikonu...</div>
<div class="a" style="left:800px;top:477px;width:88px;height:21px;background:linear-gradient(#f2f2f2,#e3e3e3);border:1px solid #acacac"></div>
<div class="t" style="left:744.0px;width:200px;text-align:center;top:482.19px;font-size:11px;color:#000;">Upřesnit...</div>
<div class="a" style="left:678px;top:619px;width:73px;height:21px;background:linear-gradient(#f2f2f2,#e3e3e3);border:1px solid #3c7fd1"></div>
<div class="t" style="left:614.5px;width:200px;text-align:center;top:624.19px;font-size:11px;color:#000;">OK</div>
<div class="a" style="left:759px;top:619px;width:73px;height:21px;background:linear-gradient(#f2f2f2,#e3e3e3);border:1px solid #acacac"></div>
<div class="t" style="left:695.5px;width:200px;text-align:center;top:624.19px;font-size:11px;color:#000;">Storno</div>
<div class="a" style="left:840px;top:619px;width:73px;height:21px;background:#f4f4f4;border:1px solid #d0d0d0"></div>
<div class="t" style="left:776.5px;width:200px;text-align:center;top:624.19px;font-size:11px;color:#8d8d8d;">Použít</div>
<div class="a" style="left:0px;top:728px;width:1366px;height:40px;background:linear-gradient(#2a99ad,#2591a6)"></div>
<svg width="30" height="28" style="left:11px;top:734px"><path d="M0.8 3.2 L11.8 1.7 L11.8 13.2 L0.8 13.2 Z M12.9 1.5 L27.1 0.4 L27.1 13.2 L12.9 13.2 Z M0.8 14.2 L11.8 14.2 L11.8 24.2 L0.8 23.6 Z M12.9 14.2 L27.1 14.2 L27.1 26.4 L12.9 24.4 Z" fill="#fff"/></svg>
<svg width="40" height="40" style="left:60px;top:728px"><defs><linearGradient id="gIE" x1="0" y1="0" x2="0.4" y2="1"><stop offset="0" stop-color="#8ae4fc"/><stop offset="1" stop-color="#2aa0e4"/></linearGradient></defs>
<path fill-rule="evenodd" d="M21.8 7.5 C29.4 7.5 35.6 13.3 35.6 20.5 L35.6 24 L16.1 24 C16.5 28 19 30.5 22.8 30.5 C25 30.5 27 30 28.5 29 L35.2 29 C33 31.5 28 33.5 21.8 33.5 C14.2 33.5 8 27.7 8 20.5 C8 13.3 14.2 7.5 21.8 7.5 Z M16.1 18.1 L29.3 18.1 C29 14.5 26.4 12.3 22.7 12.3 C19 12.3 16.5 14.5 16.1 18.1 Z" fill="url(#gIE)" stroke="#1a74b8" stroke-width="0.8"/>
<path d="M6.5 32 C3 28.5 9 18 18 11 C26 5 34 3 35.5 6 C36 8 35.2 10 34.4 12" stroke="#b8901a" stroke-width="3.6" fill="none" stroke-linecap="round"/>
<path d="M6.5 32 C3 28.5 9 18 18 11 C26 5 34 3 35.5 6 C36 8 35.2 10 34.4 12" stroke="#f7d23a" stroke-width="2.4" fill="none" stroke-linecap="round"/></svg>
<div class="a" style="left:113px;top:728px;width:55px;height:40px;background:#1d6a7c"></div>
<div class="a" style="left:114px;top:729px;width:53px;height:38px;background:#7db4c4;border:1.5px solid #d3f0f6"></div>
<div class="a" style="left:167px;top:728px;width:6px;height:40px;background:#1d6a7c"></div>
<div class="a" style="left:168px;top:729px;width:4px;height:38px;background:#7db4c4;border:1px solid #d3f0f6"></div>
<svg width="36" height="34" style="left:122px;top:733px"><defs><linearGradient id="gExF" x1="0" y1="0" x2="1" y2="1"><stop offset="0" stop-color="#fdf0b8"/><stop offset="1" stop-color="#eecb68"/></linearGradient>
<linearGradient id="gExT" x1="0" y1="0" x2="0" y2="1"><stop offset="0" stop-color="#d8f0fc"/><stop offset="1" stop-color="#7fb8e6"/></linearGradient></defs>
<path d="M3.5 4 L17 4 L18 6 L3 6 Z" fill="#eed28a"/><rect x="5" y="2.5" width="11" height="3" fill="#fff"/><rect x="5.5" y="2" width="3" height="2.2" fill="#19a019"/>
<path d="M11 6 L28 6 L29 8.5 L10.5 8.5 Z" fill="#eed28a"/><rect x="12.5" y="4.8" width="14" height="3" fill="#fff"/><rect x="13.5" y="5" width="3" height="2.2" fill="#c8402a"/>
<path d="M19 9 L31.5 9 L32 11.5 L18.5 11.5 Z" fill="#eed28a"/><rect x="20" y="7.5" width="10" height="3" fill="#fff"/><rect x="20.5" y="8" width="3" height="2.2" fill="#2a80c8"/>
<path d="M2 8.5 L18.5 8.5 L19.5 11.5 L32.5 11.5 L32.5 28.5 L2 28.5 Z" fill="url(#gExF)" stroke="#d6a845" stroke-width="0.8"/>
<path d="M6 31 L6 20 C6 18.8 6.8 18 8 18 L26.5 18 C27.7 18 28.5 18.8 28.5 20 L28.5 31 L23 31 L23 23.5 L11.5 23.5 L11.5 31 Z" fill="url(#gExT)" stroke="#5a96c4" stroke-width="0.8"/></svg>
<svg width="33" height="33" style="left:189px;top:732px"><circle cx="16" cy="16" r="16" fill="#fff"/>
<path d="M10.9 3.9 L14.2 3.9 L8.2 21.6 L5 21.6 Z M12.6 9.6 L16.8 9.6 L13.1 21.6 L10 21.6 L13.4 11.2 L12.1 11.2 Z M19.6 9.6 L22 9.6 L15.7 31 L12.4 31 Z M19.6 9.6 L26.9 9.6 L23.8 21.6 L17.5 21.6 L17.9 20 L21.4 20 L24.5 11.2 L19.2 11.2 Z" fill="#2995aa"/></svg>
<svg width="30" height="30" style="left:252px;top:733px"><circle cx="15" cy="15" r="14.5" fill="#db4437"/><path d="M27.56 7.75 A14.5 14.5 0 0 0 2.44 7.75 L8.72 18.62 A7.25 7.25 0 0 1 15.00 7.75 Z" fill="#db4437"/><path d="M2.44 7.75 A14.5 14.5 0 0 0 15.00 29.50 L21.28 18.63 A7.25 7.25 0 0 1 8.72 18.62 Z" fill="#2fa84f"/><path d="M15.00 29.50 A14.5 14.5 0 0 0 27.56 7.75 L15.00 7.75 A7.25 7.25 0 0 1 21.28 18.63 Z" fill="#fbc02d"/><circle cx="15" cy="15" r="7.25" fill="#fff"/><circle cx="15" cy="15" r="5.6" fill="#4a86d8"/></svg>
<div class="a" style="left:314px;top:733px;width:30px;height:30px;background:#078a0b"></div>
<svg width="30" height="30" style="left:314px;top:733px"><path d="M7.5 10 C7.5 5.5 9.8 3.6 12.3 3.6 C15.2 3.6 16.8 5.6 17.4 8.6" stroke="#fff" stroke-width="1.5" fill="none"/><path d="M11 9.5 C11 6.5 12.5 5.5 14 5.5" stroke="#fff" stroke-width="1" fill="none"/>
<path d="M4.1 10 L25.2 7.7 L25.2 26.9 L4.1 23.8 Z" fill="#fff"/>
<path d="M6.8 12.3 L11.4 11.9 L11.4 16.2 L6.8 16.3 Z M12.3 11.8 L16.9 11.4 L16.9 16.1 L12.3 16.2 Z M6.8 17.2 L11.4 17.1 L11.4 21.4 L6.8 21 Z M12.3 17.1 L16.9 17 L16.9 22 L12.3 21.5 Z" fill="#078a0b"/></svg>
<svg width="24" height="28" style="left:378px;top:735px"><path d="M0.5 0.5 L17 0.5 L23 6.5 L23 27.5 L0.5 27.5 Z" fill="#fafafa" stroke="#ddd" stroke-width="0.6"/><path d="M17 0.5 L17 6.5 L23 6.5" fill="#e5e5e5" stroke="#ccc" stroke-width="0.6"/></svg>
<div class="a" style="left:423px;top:728px;width:60px;height:40px;background:#1d6a7c"></div>
<div class="a" style="left:424px;top:729px;width:58px;height:38px;background:#4eaabd;border:1px solid #92d4e0"></div>
<svg width="40" height="36" style="left:432px;top:730px">
<path d="M6 21 C5 15 12 9 20 8.7 C28 8.4 33 13 33 19 C33 25 27 29.5 20 30 C17 30.2 16 29 16.5 27 C17 25 14 24.5 12 26 C9 27.5 6.5 25 6 21 Z" fill="#e4eef6" stroke="#b8cad8" stroke-width="0.6"/>
<circle cx="18.5" cy="21.4" r="2.4" fill="#4eaabd"/>
<circle cx="10.6" cy="19.5" r="2.1" fill="#e23b3b"/><circle cx="15.5" cy="14.6" r="2" fill="#5bb83a"/><circle cx="21.8" cy="12.1" r="2.2" fill="#f2c233"/>
<path d="M21 33 L30 10" stroke="#e0902a" stroke-width="2.8" stroke-linecap="round"/>
<path d="M28.6 3 L36.8 5 L30.5 10 Z" fill="#e9b070"/></svg>
<div class="a" style="left:485px;top:728px;width:60px;height:40px;background:#1d6a7c"></div>
<div class="a" style="left:486px;top:729px;width:58px;height:38px;background:#4eaabd;border:1px solid #92d4e0"></div>
<svg width="34" height="30" style="left:498px;top:733px"><use href="#ecl"/></svg>
<svg width="10" height="6" style="left:1160px;top:746px"><path d="M0 5.5 L4.5 0.5 L9 5.5 Z" fill="#fff"/></svg>
<svg width="20" height="20" style="left:1178px;top:739px">
<g stroke="#0d3e48" stroke-width="3" fill="none" stroke-linejoin="round"><path d="M5.3 3 V6 M7.5 3 V6 M4.4 6.3 H8.5 V9.5 H4.4 Z M6.4 9.5 V17"/><rect x="10.7" y="3" width="7.3" height="14.3"/></g>
<g stroke="#fff" stroke-width="1.1" fill="none"><path d="M5.3 3 V6 M7.5 3 V6 M6.4 9.5 V17"/><rect x="10.7" y="3" width="7.3" height="14.3"/></g>
<rect x="4.2" y="6.2" width="4.4" height="3.5" fill="#fff"/><rect x="12.2" y="4.6" width="4.3" height="11.2" fill="#fff"/></svg>
<svg width="20" height="20" style="left:1204px;top:739px">
<g stroke="#0d3e48" stroke-width="3" fill="none" stroke-linejoin="round"><rect x="2.8" y="3" width="4" height="4.6" rx="1.2"/><path d="M4.8 7.6 V16.5"/><rect x="7.5" y="3.6" width="8.5" height="10"/><path d="M9.5 16 H14.5 M12 13.6 V16"/></g>
<g stroke="#fff" stroke-width="1.2" fill="none"><rect x="2.8" y="3" width="4" height="4.6" rx="1.2"/><path d="M4.8 7.6 V16.5"/><rect x="7.5" y="3.6" width="8.5" height="10"/><path d="M9.5 16 H14.5 M12 13.6 V16"/></g></svg>
<svg width="20" height="20" style="left:1227px;top:739px">
<g stroke="#0d3e48" stroke-width="2.6" fill="none" stroke-linejoin="round"><path d="M2.5 7 H4.8 L9 3 V17 L4.8 13 H2.5 Z"/><path d="M11.4 8.8 C12 9.5 12 10.5 11.4 11.2 M13 6.2 C14.6 8.3 14.6 11.7 13 13.8 M15 4.4 C17.5 7.5 17.5 12.5 15 15.6"/></g>
<path d="M2.5 7 H4.8 L9 3 V17 L4.8 13 H2.5 Z" fill="#fff"/><path d="M11.4 8.8 C12 9.5 12 10.5 11.4 11.2 M13 6.2 C14.6 8.3 14.6 11.7 13 13.8 M15 4.4 C17.5 7.5 17.5 12.5 15 15.6" stroke="#fff" stroke-width="1.1" fill="none"/></svg>
<div class="t " style="left:1261.5px;top:742.42px;font-size:12.5px;color:#fff;transform:scaleX(0.77);transform-origin:0 0">CES</div>
<div class="t " style="left:1310.5px;top:734.59px;font-size:12.3px;color:#fff;transform:scaleX(0.85);transform-origin:0 0">12:43</div>
<div class="t " style="left:1298.6px;top:751.59px;font-size:12.3px;color:#fff;transform:scaleX(0.88);transform-origin:0 0">4. 7. 2015</div>
</body></html>
